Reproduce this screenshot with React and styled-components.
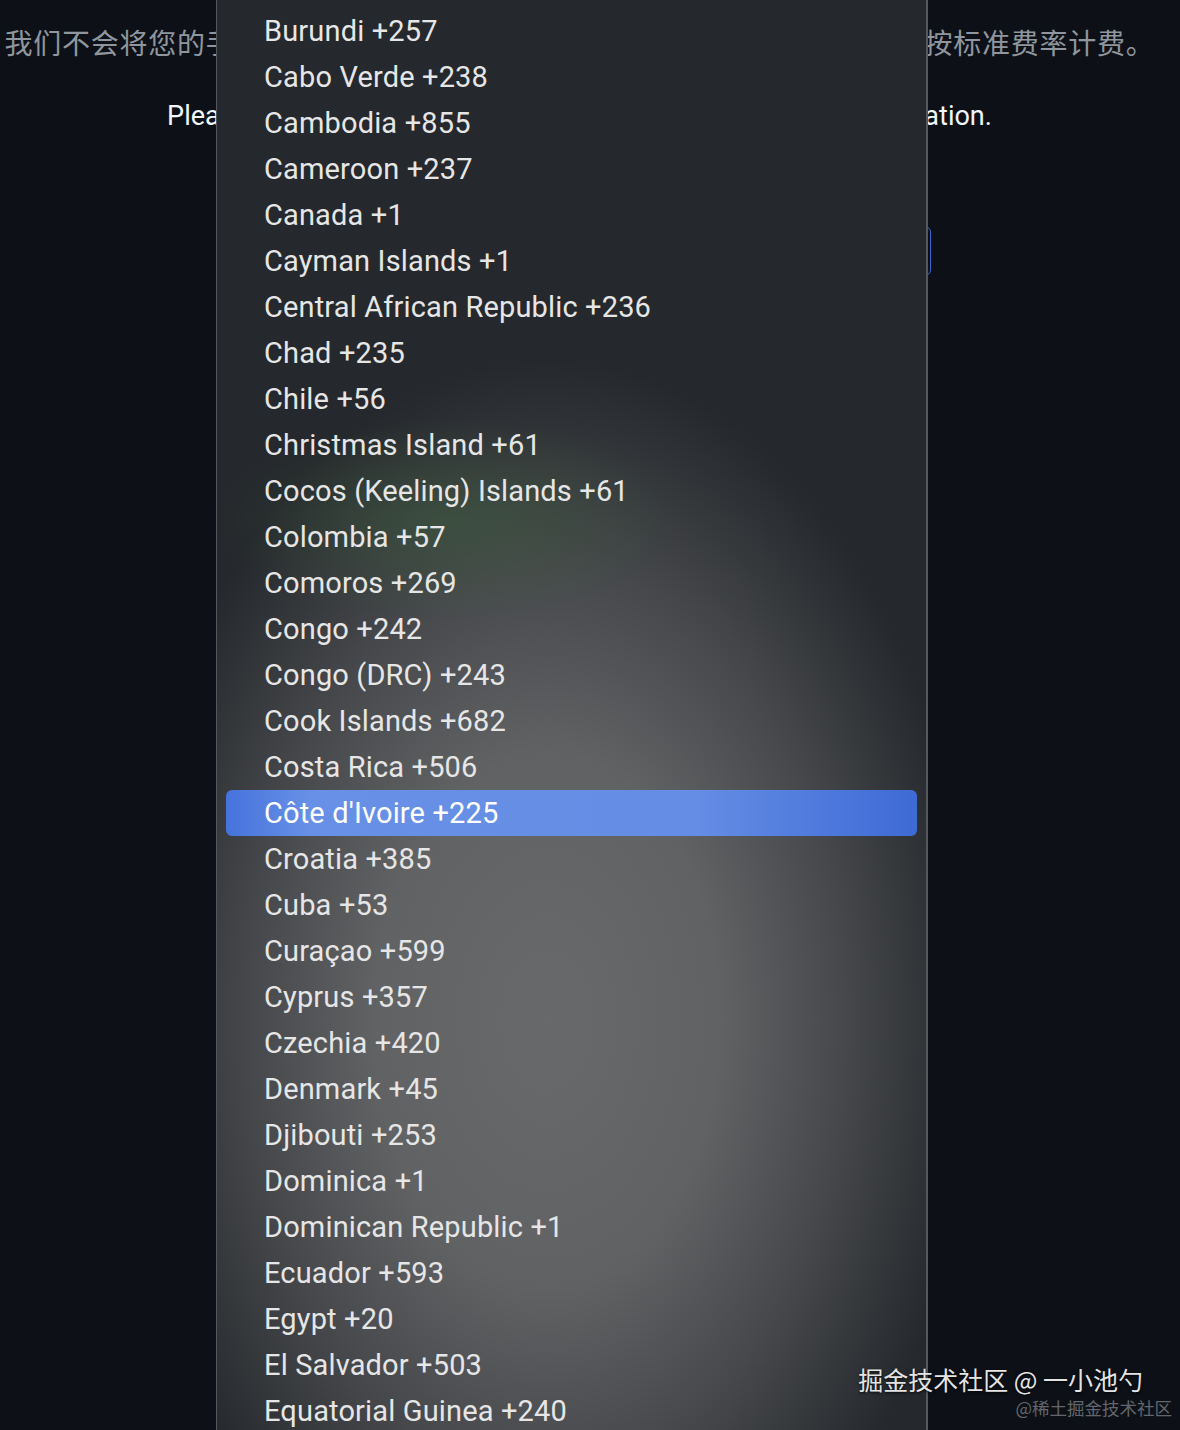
import styled, { createGlobalStyle } from 'styled-components';

const countries = [
  ['Burundi', '+257'],
  ['Cabo Verde', '+238'],
  ['Cambodia', '+855'],
  ['Cameroon', '+237'],
  ['Canada', '+1'],
  ['Cayman Islands', '+1'],
  ['Central African Republic', '+236'],
  ['Chad', '+235'],
  ['Chile', '+56'],
  ['Christmas Island', '+61'],
  ['Cocos (Keeling) Islands', '+61'],
  ['Colombia', '+57'],
  ['Comoros', '+269'],
  ['Congo', '+242'],
  ['Congo (DRC)', '+243'],
  ['Cook Islands', '+682'],
  ['Costa Rica', '+506'],
  ["Côte d'Ivoire", '+225'],
  ['Croatia', '+385'],
  ['Cuba', '+53'],
  ['Curaçao', '+599'],
  ['Cyprus', '+357'],
  ['Czechia', '+420'],
  ['Denmark', '+45'],
  ['Djibouti', '+253'],
  ['Dominica', '+1'],
  ['Dominican Republic', '+1'],
  ['Ecuador', '+593'],
  ['Egypt', '+20'],
  ['El Salvador', '+503'],
  ['Equatorial Guinea', '+240'],
];

const selected = "Côte d'Ivoire";

export default function App() {
  return (
    <>
      <GlobalStyle />
      <Page>
        <Notice>我们不会将您的手机号码用于任何其他目的。短信和数据流量费用可能会按标准费率计费。</Notice>
        <Hint>Please enter your phone number to receive a code for authentication.</Hint>
        <PhoneField />

        {/* open country picker */}
        <Menu>
          {countries.map(([name, code]) => (
            <Option key={name} $active={name === selected}>
              {name} {code}
            </Option>
          ))}
        </Menu>

        <Watermark>
          <Credit>掘金技术社区 @ 一小池勺</Credit>
          <Source>@稀土掘金技术社区</Source>
        </Watermark>
      </Page>
    </>
  );
}

const GlobalStyle = createGlobalStyle`
  html, body {
    margin: 0;
    background: #0d1117;
    overflow: hidden;
  }

  * {
    box-sizing: border-box;
  }
`;

const Page = styled.div`
  position: relative;
  height: 1430px;
  padding-right: 21px;
  text-align: center;
  font-family: Roboto, "Noto Sans CJK SC", sans-serif;
`;

const Notice = styled.p`
  margin: 0;
  padding-top: 22px;
  font-family: "Noto Sans CJK SC", sans-serif;
  font-size: 28px;
  line-height: 40px;
  letter-spacing: 0.75px;
  color: #8f969e;
  white-space: nowrap;
`;

const Hint = styled.p`
  margin: 36px 0 0;
  font-size: 27px;
  line-height: 36px;
  color: #f0f6fc;
  white-space: nowrap;
`;

const PhoneField = styled.div`
  width: 702px;
  height: 50px;
  margin: 92px auto 0;
  border: 1px solid #3a66d0;
  border-radius: 6px;
`;

const Menu = styled.div`
  position: absolute;
  top: 0;
  left: 216px;
  width: 712px;
  height: 1430px;
  padding: 8px 9px;
  overflow: hidden;
  text-align: left;
  border-left: 1px solid #55585d;
  border-right: 2px solid #55585d;
  background:
    radial-gradient(ellipse 230px 100px at 230px 520px, rgba(60, 95, 62, 0.5) 0%, rgba(60, 95, 62, 0) 100%),
    radial-gradient(ellipse 430px 660px at 330px 1020px, #68696b 0%, #616264 40%, #45474a 70%, rgba(38, 41, 45, 0) 100%),
    #25282c;
`;

const Option = styled.div`
  height: 46px;
  padding-left: 38px;
  border-radius: 6px;
  font-family: Roboto, sans-serif;
  font-size: 29px;
  line-height: 46px;
  letter-spacing: 0.15px;
  white-space: nowrap;
  color: ${(p) => (p.$active ? '#ffffff' : '#e6e6e6')};
  background: ${(p) =>
    p.$active
      ? 'linear-gradient(90deg, #4673dc 0%, #6790e6 12%, #658de5 68%, #3e6ad5 100%)'
      : 'transparent'};
`;

const Watermark = styled.div`
  position: absolute;
  right: 8px;
  bottom: 10px;
  display: flex;
  flex-direction: column;
  align-items: flex-end;
  font-family: "Noto Sans CJK SC", sans-serif;
`;

const Credit = styled.div`
  margin-right: 29px;
  font-size: 25px;
  line-height: 34px;
  color: #e4e4e4;
  text-shadow: 0 1px 3px rgba(0, 0, 0, 0.9);
`;

const Source = styled.div`
  font-size: 17.5px;
  line-height: 24px;
  color: #62666c;
`;
